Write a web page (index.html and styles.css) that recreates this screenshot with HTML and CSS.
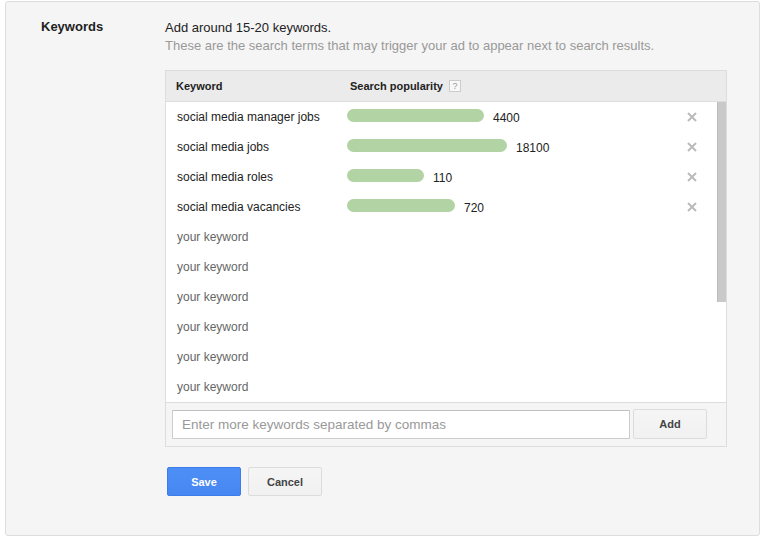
FILE: index.html
```html
<!DOCTYPE HTML>
<html lang="en">
  <head>
    <title>Keywords</title>
    <meta charset="utf-8" />
    <link rel="stylesheet" href="styles.css">
  </head>
  <body>
    <div class='card'>
      <div class='field'>
        <div class='label'>Keywords</div>
        <div class='content'>
          <div class='intro'>Add around 15-20 keywords.</div>
          <div class='hint'>These are the search terms that may trigger your ad to appear next to search results.</div>

          <div class='table'>
            <div class='head'>
              <div class='kw'>Keyword</div>
              <div class='pop'>Search popularity <span class='help'>?</span></div>
            </div>
            <div class='rows'>
              <div class='row'>
                <div class='kw'>social media manager jobs</div>
                <div class='pop'><span class='bar' style='width: 137px'></span><span class='num'>4400</span></div>
                <svg class='remove' width='10' height='10' viewBox='0 0 10 10'><path d='M1 1L9 9M9 1L1 9' /></svg>
              </div>
              <div class='row'>
                <div class='kw'>social media jobs</div>
                <div class='pop'><span class='bar' style='width: 160px'></span><span class='num'>18100</span></div>
                <svg class='remove' width='10' height='10' viewBox='0 0 10 10'><path d='M1 1L9 9M9 1L1 9' /></svg>
              </div>
              <div class='row'>
                <div class='kw'>social media roles</div>
                <div class='pop'><span class='bar' style='width: 77px'></span><span class='num'>110</span></div>
                <svg class='remove' width='10' height='10' viewBox='0 0 10 10'><path d='M1 1L9 9M9 1L1 9' /></svg>
              </div>
              <div class='row'>
                <div class='kw'>social media vacancies</div>
                <div class='pop'><span class='bar' style='width: 108px'></span><span class='num'>720</span></div>
                <svg class='remove' width='10' height='10' viewBox='0 0 10 10'><path d='M1 1L9 9M9 1L1 9' /></svg>
              </div>
              <div class='row empty'><div class='kw'>your keyword</div></div>
              <div class='row empty'><div class='kw'>your keyword</div></div>
              <div class='row empty'><div class='kw'>your keyword</div></div>
              <div class='row empty'><div class='kw'>your keyword</div></div>
              <div class='row empty'><div class='kw'>your keyword</div></div>
              <div class='row empty'><div class='kw'>your keyword</div></div>
              <div class='thumb'></div>
            </div>
            <div class='adder'>
              <input class='more' type='text' placeholder='Enter more keywords separated by commas'>
              <button class='btn'>Add</button>
            </div>
          </div>

          <div class='actions'>
            <button class='btn primary'>Save</button>
            <button class='btn'>Cancel</button>
          </div>
        </div>
      </div>
    </div>
  </body>
</html>
```

FILE: styles.css
```css
body {
  margin: 0;
  background-color: #ffffff;
  font-family: "Liberation Sans", Arial, sans-serif;
  color: #222222;
}

.card {
  box-sizing: border-box;
  width: 755px;
  height: 535px;
  margin: 1px 6px 0 5px;
  padding-top: 17px;
  background-color: #f5f5f5;
  border: 1px solid #dddddd;
  border-radius: 3px;
}

.field {
  display: flex;
}

.label {
  width: 124px;
  padding-left: 35px;
  font-size: 13px;
  font-weight: bold;
  line-height: 18px;
  margin-top: -1px;
}

.content {
  width: 562px;
}

.intro,
.hint {
  font-size: 13px;
  line-height: 18px;
}

.hint {
  color: #999999;
}

.table {
  margin-top: 15px;
  border: 1px solid #dddddd;
}

.head {
  display: flex;
  align-items: center;
  height: 30px;
  background-color: #ebebeb;
  border-bottom: 1px solid #dddddd;
  font-size: 11px;
  font-weight: bold;
}

.head .kw {
  width: 173px;
  padding-left: 10px;
}

.head .pop {
  display: flex;
  align-items: center;
  padding-left: 1px;
}

.help {
  box-sizing: border-box;
  width: 12px;
  height: 12px;
  margin-left: 6px;
  border: 1px solid #cccccc;
  background-color: #f8f8f8;
  color: #999999;
  font-size: 9px;
  font-weight: normal;
  line-height: 10px;
  text-align: center;
}

.rows {
  position: relative;
  background-color: #ffffff;
}

.row {
  display: flex;
  align-items: center;
  height: 30px;
  font-size: 12px;
}

.row .kw {
  width: 170px;
  padding-left: 11px;
  margin-top: -1px;
}

.row.empty .kw {
  color: #666666;
}

.row .pop {
  display: flex;
  align-items: center;
  flex: 1;
}

.bar {
  height: 13px;
  border-radius: 7px;
  background-color: #b2d3a4;
  margin-top: -3px;
}

.num {
  margin-left: 9px;
  margin-top: 2px;
}

.remove {
  margin-right: 29px;
  margin-top: -1px;
  stroke: #bbbbbb;
  stroke-width: 2;
}

.thumb {
  position: absolute;
  right: 0;
  top: 0;
  box-sizing: border-box;
  width: 9px;
  height: 200px;
  background-color: #c9c9c9;
  border-left: 1px solid #bcbcbc;
}

.adder {
  box-sizing: border-box;
  display: flex;
  align-items: flex-start;
  height: 44px;
  padding: 6px 19px 0 6px;
  border-top: 1px solid #dddddd;
}

.more {
  box-sizing: border-box;
  width: 458px;
  height: 29px;
  margin: 1px 3px 0 0;
  padding: 0 9px;
  border: 1px solid #cccccc;
  border-top-color: #c0c0c0;
  border-radius: 1px;
  font-family: "Liberation Sans", Arial, sans-serif;
  font-size: 13.5px;
  color: #222222;
  outline: none;
}

.more::placeholder {
  color: #999999;
}

.btn {
  box-sizing: border-box;
  width: 74px;
  height: 30px;
  border: 1px solid #dcdcdc;
  border-radius: 2px;
  background-color: #f3f3f3;
  background-image: linear-gradient(#f5f5f5, #f1f1f1);
  color: #444444;
  font-family: "Liberation Sans", Arial, sans-serif;
  font-size: 11px;
  font-weight: bold;
  cursor: pointer;
}

.actions {
  display: flex;
  gap: 7px;
  margin-top: 20px;
  padding-left: 2px;
}

.actions .btn {
  height: 29px;
}

.btn.primary {
  border-color: #3b7ded;
  background-color: #4a8af4;
  background-image: linear-gradient(#4d8ef6, #4787f2);
  color: #ffffff;
}
```
